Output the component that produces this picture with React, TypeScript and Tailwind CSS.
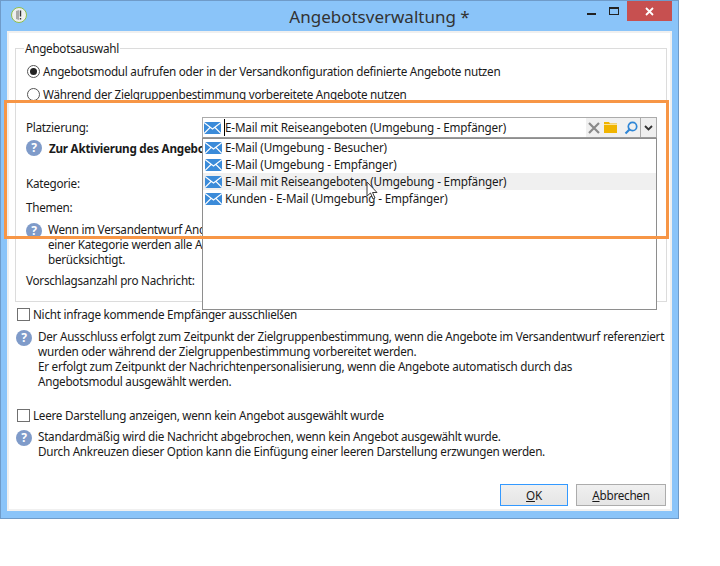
import React from "react";

const MailIcon = () => (
  <svg width="17" height="12" viewBox="0 0 17 12" className="shrink-0">
    <rect width="17" height="12" fill="#3b8bd9" />
    <path d="M0 .5 L8.5 7 L17 .5 M0 11.5 L6 5.5 M17 11.5 L11 5.5" stroke="#fff" strokeWidth="1.1" fill="none" />
  </svg>
);

const HelpIcon = () => (
  <span className="flex h-4 w-4 shrink-0 items-center justify-center rounded-full bg-[#7f9bc9] text-[12px] leading-none font-bold text-white">
    ?
  </span>
);

const Checkbox = () => <span className="h-[13px] w-[13px] shrink-0 border border-[#707070] bg-white" />;

const dropdownItems = [
  "E-Mail (Umgebung - Besucher)",
  "E-Mail (Umgebung - Empfänger)",
  "E-Mail mit Reiseangeboten (Umgebung - Empfänger)",
  "Kunden - E-Mail (Umgebung - Empfänger)",
];

export default function App() {
  return (
    <div className="relative h-[566px] w-[720px] overflow-hidden bg-white font-['Noto_Sans',sans-serif] text-[11.7px] leading-[15px] tracking-[-0.26px] text-[#1a1a1a]">
      {/* window frame */}
      <div className="flex h-[519px] w-[679px] flex-col border border-[#6f9bc9] bg-[#8ac4f9] px-[6px] pb-[7px]">
        <div className="relative flex h-[30px] shrink-0 items-center justify-center pl-[80px]">
          <span className="absolute top-[6px] left-[4px] flex h-4 w-4 items-center justify-center rounded-full border border-[#8fbf4a] bg-[#eeeeee]">
            <svg width="10" height="12" viewBox="0 0 10 12">
              <path d="M2 2 L2 10 L5 11 L5 1 Z" fill="#a9a9a9" />
              <path d="M6.5 1.5 V7.5 M6.5 9 V10.5" stroke="#333" strokeWidth="1.4" />
            </svg>
          </span>
          <span className="text-[17px] tracking-normal text-[#333333]">Angebotsverwaltung *</span>
          <div className="absolute top-0 right-0 flex items-start">
            <svg width="9" height="3" viewBox="0 0 9 3" className="mt-[12px] mr-[13px]">
              <rect width="9" height="2" fill="#222" />
            </svg>
            <svg width="10" height="8" viewBox="0 0 10 8" className="mt-[6px] mr-[8px]">
              <rect x=".5" y=".5" width="9" height="7" fill="none" stroke="#222" />
              <rect width="10" height="2" fill="#222" />
            </svg>
            <span className="flex h-[20px] w-[45px] items-center justify-center bg-[#c75050]">
              <svg width="9" height="9" viewBox="0 0 9 9">
                <path d="M1 1 L8 8 M8 1 L1 8" stroke="#fff" strokeWidth="1.8" />
              </svg>
            </span>
          </div>
        </div>

        {/* client area */}
        <div className="flex min-h-0 flex-1 flex-col border-2 border-[#f0f0f0] bg-white px-[6px]">
          <fieldset className="mt-[8px] h-[261px] shrink-0 border border-[#dcdcdc] pr-[9px] pl-[10px]">
            <legend className="ml-[-2px] px-[1px]">Angebotsauswahl</legend>
            <div className="mt-[8px] flex items-center gap-[3px] pl-[1px]">
              <span className="flex h-[13px] w-[13px] items-center justify-center rounded-full border border-[#555] bg-white">
                <span className="h-[7px] w-[7px] rounded-full bg-[#222]" />
              </span>
              <span>Angebotsmodul aufrufen oder in der Versandkonfiguration definierte Angebote nutzen</span>
            </div>
            <div className="mt-[8px] flex items-center gap-[3px] pl-[1px]">
              <span className="h-[13px] w-[13px] rounded-full border border-[#555] bg-white" />
              <span>Während der Zielgruppenbestimmung vorbereitete Angebote nutzen</span>
            </div>

            <div className="mt-[15px] flex items-center">
              <span className="w-[176px] shrink-0">Platzierung:</span>
              <div className="flex h-[21px] w-[455px] items-center border border-[#ababab] border-b-[#9a9a9a] bg-white">
                <span className="ml-[1px] flex">
                  <MailIcon />
                </span>
                <span className="ml-[3px] h-[17px] w-px bg-black" />
                <span className="flex-1 tracking-[-0.18px]">E-Mail mit Reiseangeboten (Umgebung - Empfänger)</span>
                <div className="flex h-[19px] items-center gap-[4px] bg-[#f0f0f0] px-[2px]">
                  <svg width="12" height="12" viewBox="0 0 12 12">
                    <path d="M1 1 L11 11 M11 1 L1 11" stroke="#8a8a8a" strokeWidth="2.2" />
                  </svg>
                  <svg width="13" height="11" viewBox="0 0 13 11">
                    <path d="M0 0 H5 L6 1.5 H13 V11 H0 Z" fill="#f0b400" />
                    <rect y="2" width="13" height="1" fill="#fbe39a" />
                  </svg>
                  <svg width="14" height="14" viewBox="0 0 14 14" className="ml-[3px]">
                    <circle cx="8.5" cy="5.5" r="4.2" fill="none" stroke="#2f86d6" strokeWidth="1.7" />
                    <path d="M5.5 8.5 L1.5 12.5" stroke="#2f86d6" strokeWidth="2.2" />
                  </svg>
                </div>
                <span className="flex h-[19px] w-[16px] items-center justify-center border-l border-[#ababab] bg-[#efefef]">
                  <svg width="9" height="6" viewBox="0 0 9 6">
                    <path d="M1 1 L4.5 4.5 L8 1" fill="none" stroke="#333" strokeWidth="1.8" />
                  </svg>
                </span>
              </div>
            </div>

            <div className="mt-[2px] flex items-center gap-[7px] font-bold">
              <HelpIcon />
              <span className="whitespace-nowrap">Zur Aktivierung des Angebo</span>
            </div>
            <p className="mt-[20px]">Kategorie:</p>
            <p className="mt-[9px]">Themen:</p>
            <div className="mt-[7px] flex items-start gap-[6px]">
              <span className="mt-[1px] flex">
                <HelpIcon />
              </span>
              <p className="whitespace-nowrap">
                Wenn im Versandentwurf Ang
                <br />
                einer Kategorie werden alle A
                <br />
                berücksichtigt.
              </p>
            </div>
            <p className="mt-[6px]">Vorschlagsanzahl pro Nachricht:</p>
          </fieldset>

          <div className="mt-[5px] flex items-center gap-[3px] pl-[2px]">
            <Checkbox />
            <span>Nicht infrage kommende Empfänger ausschließen</span>
          </div>
          <div className="mt-[7px] flex items-start gap-[6px] pl-[1px]">
            <span className="mt-[1px] flex">
              <HelpIcon />
            </span>
            <p className="whitespace-nowrap">
              Der Ausschluss erfolgt zum Zeitpunkt der Zielgruppenbestimmung, wenn die Angebote im Versandentwurf referenziert
              <br />
              wurden oder während der Zielgruppenbestimmung vorbereitet werden.
              <br />
              Er erfolgt zum Zeitpunkt der Nachrichtenpersonalisierung, wenn die Angebote automatisch durch das
              <br />
              Angebotsmodul ausgewählt werden.
            </p>
          </div>
          <div className="mt-[19px] flex items-center gap-[3px] pl-[2px]">
            <Checkbox />
            <span>Leere Darstellung anzeigen, wenn kein Angebot ausgewählt wurde</span>
          </div>
          <div className="mt-[6px] flex items-start gap-[6px] pl-[1px]">
            <span className="mt-[1px] flex">
              <HelpIcon />
            </span>
            <p className="whitespace-nowrap">
              Standardmäßig wird die Nachricht abgebrochen, wenn kein Angebot ausgewählt wurde.
              <br />
              Durch Ankreuzen dieser Option kann die Einfügung einer leeren Darstellung erzwungen werden.
            </p>
          </div>

          <div className="mt-auto mr-[-2px] mb-[3px] flex justify-end gap-[8px]">
            <button className="h-[22px] w-[68px] border border-[#3399ff] bg-gradient-to-b from-[#f0f0f0] to-[#e5e5e5]">
              <u>O</u>K
            </button>
            <button className="h-[22px] w-[90px] border border-[#acacac] bg-gradient-to-b from-[#f0f0f0] to-[#e5e5e5]">
              <u>A</u>bbrechen
            </button>
          </div>
        </div>
      </div>

      {/* open dropdown list */}
      <div className="absolute top-[138px] left-[202px] h-[172px] w-[455px] border border-[#8e8e8e] bg-white tracking-[-0.17px]">
        {dropdownItems.map((item, i) => (
          <div key={item} className={`flex h-[17px] items-center gap-[3px] pl-[2px] ${i === 2 ? "bg-[#f0f0f0]" : ""}`}>
            <MailIcon />
            <span>{item}</span>
          </div>
        ))}
      </div>

      {/* orange annotation */}
      <div className="pointer-events-none absolute top-[100px] left-[4px] h-[139px] w-[665px] border-[3px] border-[#f79646]" />

      {/* mouse cursor */}
      <svg width="12" height="19" viewBox="0 0 12 19" className="absolute top-[181px] left-[366px]">
        <path d="M1 1 V15 L4.5 12 L7 18 L9 17 L6.5 11.5 H11 Z" fill="#fff" stroke="#3a3a3a" strokeWidth="1" />
      </svg>
    </div>
  );
}
